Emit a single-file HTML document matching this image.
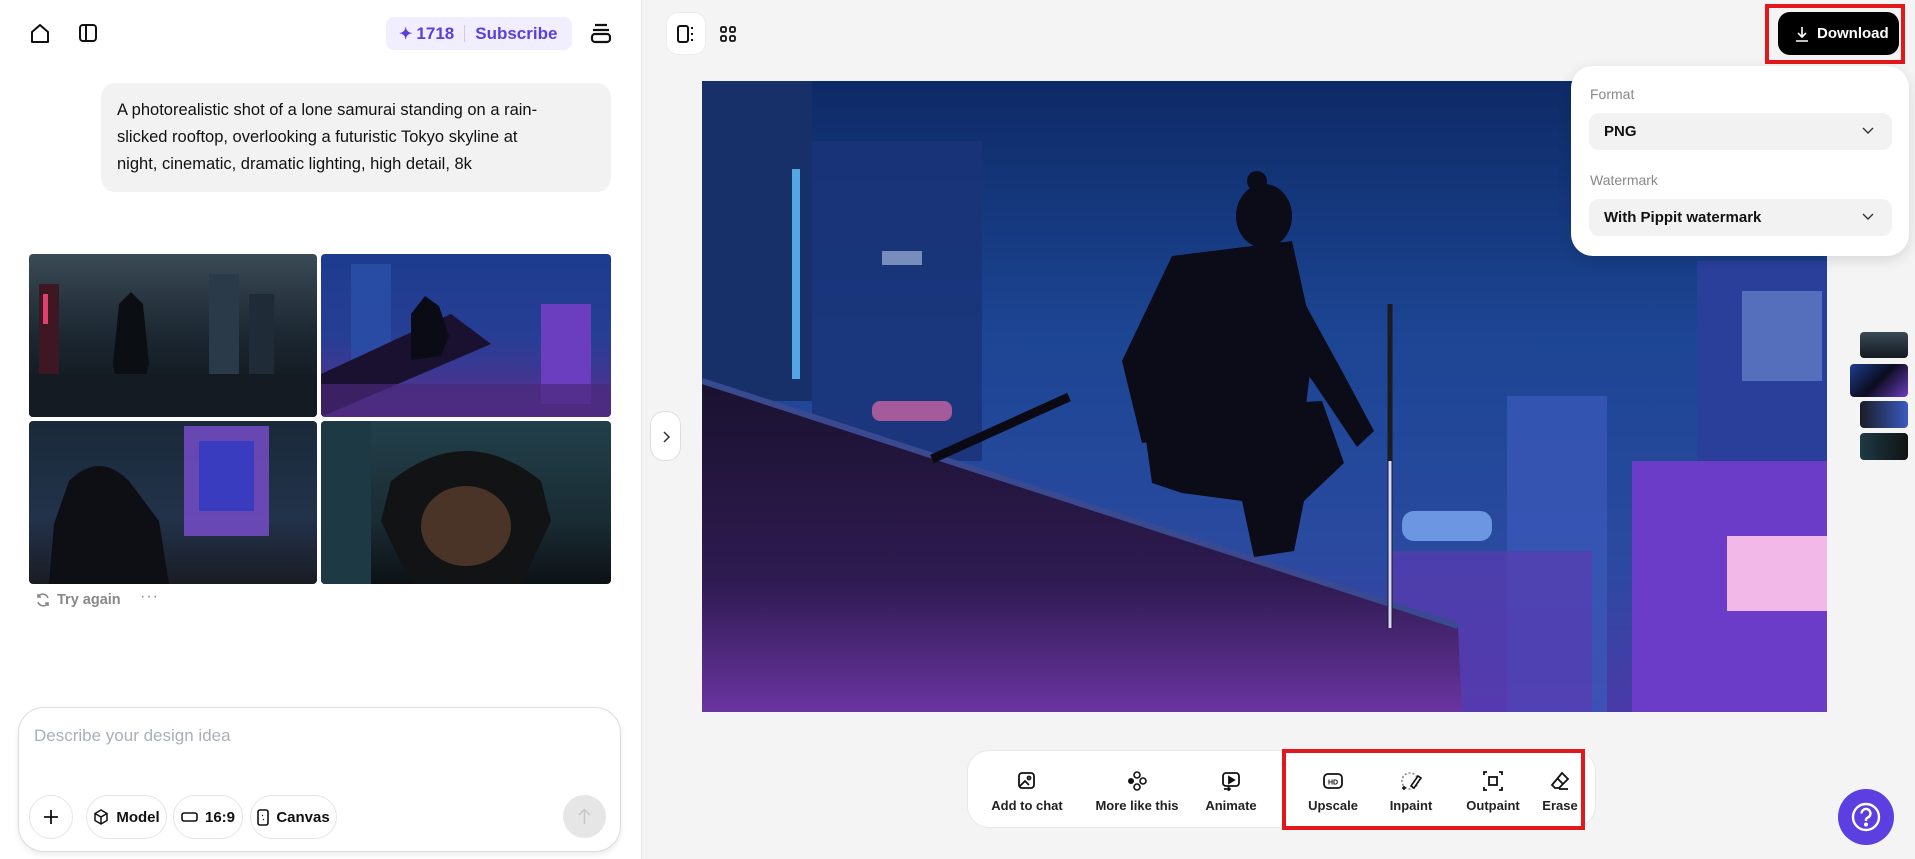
<!DOCTYPE html>
<html><head><meta charset="utf-8"><style>
*{box-sizing:border-box;margin:0;padding:0}
body{width:1915px;height:859px;overflow:hidden;font-family:"Liberation Sans",sans-serif;background:#f4f4f4;position:relative;color:#111}
.abs{position:absolute}
#left{left:0;top:0;width:642px;height:859px;background:#fff;border-right:1px solid #e6e6e6}
.ic{position:absolute}
.pill{left:386px;top:17px;width:186px;height:33px;background:#f1eeff;border-radius:8px;color:#5a3fe0;font-weight:bold;font-size:17px;display:flex;align-items:center;padding-left:13px}
.bubble{left:101px;top:83px;width:510px;height:109px;background:#f2f2f2;border-radius:14px;padding:14px 0 0 16px;font-size:16.5px;line-height:27px;color:#111}
.th{position:absolute;border-radius:4px;overflow:hidden}
.input{left:18px;top:707px;width:603px;height:145px;border:1px solid #ddd;border-radius:26px;background:#fff;box-shadow:0 3px 6px rgba(0,0,0,.08)}
.chip{position:absolute;top:87px;height:44px;border:1px solid #e5e5e5;border-radius:22px;display:flex;align-items:center;justify-content:center;gap:7px;font-weight:bold;font-size:15px}
.tb{position:absolute;top:0;height:78px;display:flex;flex-direction:column;align-items:center;justify-content:center;font-size:13px;font-weight:bold;color:#222;gap:7px;padding-top:4px}
.sel{position:absolute;left:18px;width:303px;height:37px;background:#f2f2f2;border-radius:10px;font-weight:bold;font-size:15px;display:flex;align-items:center;padding-left:15px}
.sel svg{position:absolute;right:18px;top:14px}
.lbl{position:absolute;left:19px;color:#888;font-size:14px}
</style></head><body>
<div id="left" class="abs">
 <svg class="ic" style="left:29px;top:22px" width="22" height="22" viewBox="0 0 22 22" fill="none" stroke="#111" stroke-width="2" stroke-linejoin="round"><path d="M3 10L11 3l8 7v10H3z"/></svg>
 <svg class="ic" style="left:78px;top:23px" width="20" height="20" viewBox="0 0 20 20" fill="none" stroke="#111" stroke-width="2"><rect x="2" y="2" width="16" height="16" rx="3"/><path d="M8 2v16"/></svg>
 <div class="abs pill"><span style="font-size:16px;margin-right:4px">✦</span>1718<span style="width:1px;height:17px;background:#cfc8f0;margin:0 10px"></span>Subscribe</div>
 <svg class="ic" style="left:590px;top:22px" width="22" height="22" viewBox="0 0 22 22" fill="none" stroke="#111" stroke-width="2.2"><path d="M5 3h12M3 8h16"/><rect x="2" y="12" width="18" height="8" rx="3"/></svg>
 <div class="abs bubble">A photorealistic shot of a lone samurai standing on a rain-<br>slicked rooftop, overlooking a futuristic Tokyo skyline at<br>night, cinematic, dramatic lighting, high detail, 8k</div>

 <div class="th" style="left:29px;top:254px;width:288px;height:163px;background:linear-gradient(180deg,#3a4a55 0%,#1c2731 50%,#0d1218 100%)">
  <svg width="288" height="163"><rect x="180" y="20" width="30" height="110" fill="#2a3a48"/><rect x="220" y="40" width="25" height="90" fill="#1f2c38"/><rect x="10" y="30" width="20" height="100" fill="#3d1822"/><rect x="14" y="40" width="5" height="30" fill="#e0406a"/><path d="M90 50l12-12 12 12 6 60-10 40h-20l-6-40z" fill="#0b0f14"/><rect x="0" y="120" width="288" height="43" fill="#141b22"/></svg></div>
 <div class="th" style="left:321px;top:254px;width:290px;height:163px;background:linear-gradient(180deg,#1d3c8e 0%,#263e94 50%,#5a2f8f 100%)">
  <svg width="290" height="163"><rect x="30" y="10" width="40" height="100" fill="#2b4fa8" opacity=".8"/><rect x="220" y="50" width="50" height="100" fill="#6b3ec0"/><path d="M0 120L130 60 170 90 0 163z" fill="#1a1030"/><path d="M90 60l14-18 14 10 10 30-8 20-30 4z" fill="#0a0b14"/><rect x="0" y="130" width="290" height="33" fill="#4a2a7a" opacity=".7"/></svg></div>
 <div class="th" style="left:29px;top:421px;width:288px;height:163px;background:linear-gradient(180deg,#1a2a3a 0%,#22324a 60%,#1a1c24 100%)">
  <svg width="288" height="163"><rect x="155" y="5" width="85" height="110" fill="#7b4fd0" opacity=".8"/><rect x="170" y="20" width="55" height="70" fill="#3a3cc0"/><path d="M40 60q30-30 60 0l30 40 10 63H20l5-60z" fill="#0e0f14"/></svg></div>
 <div class="th" style="left:321px;top:421px;width:290px;height:163px;background:linear-gradient(180deg,#22404a 0%,#1a2c34 60%,#0c1216 100%)">
  <svg width="290" height="163"><path d="M70 60q75-60 150 0l10 40-30 63H90l-30-63z" fill="#111314"/><ellipse cx="145" cy="105" rx="45" ry="40" fill="#4a3428"/><rect x="0" y="0" width="50" height="163" fill="#1d3a44"/></svg></div>

 <svg class="ic" style="left:35px;top:592px" width="16" height="16" viewBox="0 0 16 16" fill="none" stroke="#888" stroke-width="1.6"><path d="M13 6A5.5 5.5 0 0 0 3 5M3 10a5.5 5.5 0 0 0 10 1M3 2v3h3M13 14v-3h-3"/></svg>
 <div class="abs" style="left:57px;top:592px;font-size:14.5px;color:#888;font-weight:bold">Try again</div>
 <div class="abs" style="left:140px;top:588px;font-size:16px;color:#888;letter-spacing:1px">···</div>

 <div class="abs input">
  <div class="abs" style="left:15px;top:18px;font-size:17px;color:#aab0b8">Describe your design idea</div>
  <div class="chip" style="left:10px;width:44px"><svg width="18" height="18"><path d="M9 2v14M2 9h14" stroke="#111" stroke-width="1.8"/></svg></div>
  <div class="chip" style="left:67px;width:81px"><svg width="16" height="16" viewBox="0 0 16 16" fill="none" stroke="#111" stroke-width="1.5"><path d="M8 1l6 3.5v7L8 15l-6-3.5v-7zM2 4.5L8 8l6-3.5M8 8v7"/></svg>Model</div>
  <div class="chip" style="left:154px;width:70px"><svg width="17" height="12"><rect x="1" y="2" width="15" height="8" rx="2" fill="none" stroke="#111" stroke-width="1.6"/></svg>16:9</div>
  <div class="chip" style="left:231px;width:87px"><svg width="12" height="17"><rect x="1" y="1" width="10" height="15" rx="2" fill="none" stroke="#111" stroke-width="1.6"/><path d="M5 6l1 1M6 10l1 1" stroke="#111"/></svg>Canvas</div>
  <div class="abs" style="left:544px;top:87px;width:43px;height:43px;border-radius:50%;background:#e6e6e6"><svg width="43" height="43"><path d="M21.5 29V15M16 20l5.5-5.5L27 20" stroke="#c8c8c8" stroke-width="1.5" fill="none"/></svg></div>
 </div>
</div>

<div class="abs" style="left:666px;top:12px;width:40px;height:43px;background:#fff;border-radius:12px;border:1px solid #ececec"></div>
<svg class="ic" style="left:676px;top:24px" width="20" height="20" viewBox="0 0 20 20" fill="none" stroke="#111" stroke-width="2"><rect x="2" y="2" width="10" height="16" rx="2"/><path d="M16 3v2M16 9v2M16 15v2"/></svg>
<svg class="ic" style="left:718px;top:24px" width="20" height="20" viewBox="0 0 20 20" fill="none" stroke="#111" stroke-width="1.8"><rect x="3" y="3" width="5" height="5" rx="1.5"/><rect x="12" y="3" width="5" height="5" rx="1.5"/><rect x="3" y="12" width="5" height="5" rx="1.5"/><rect x="12" y="12" width="5" height="5" rx="1.5"/></svg>

<svg class="abs" style="left:702px;top:81px" width="1125" height="631" viewBox="0 0 1125 631">
 <defs>
  <linearGradient id="sky" x1="0" y1="0" x2="0" y2="1"><stop offset="0" stop-color="#0e2a66"/><stop offset=".4" stop-color="#1c4593"/><stop offset=".75" stop-color="#2a4aa0"/><stop offset="1" stop-color="#4a3aa8"/></linearGradient>
  <linearGradient id="roof" x1="0" y1="0" x2="0" y2="1"><stop offset="0" stop-color="#1a1230"/><stop offset=".6" stop-color="#2e1a50"/><stop offset="1" stop-color="#6a34a0"/></linearGradient>
 </defs>
 <rect width="1125" height="631" fill="url(#sky)"/>
 <rect x="0" y="0" width="110" height="320" fill="#17306a"/>
 <rect x="90" y="88" width="8" height="210" fill="#63c4ff" opacity=".8"/>
 <rect x="110" y="60" width="170" height="320" fill="#1a3478" opacity=".85"/>
 <rect x="180" y="170" width="40" height="14" fill="#b8c8e8" opacity=".6"/>
 <rect x="170" y="320" width="80" height="20" rx="8" fill="#e06aa8" opacity=".7"/>
 <rect x="805" y="315" width="100" height="316" fill="#3a58b8" opacity=".8"/>
 <rect x="995" y="180" width="130" height="451" fill="#2a3f9a"/>
 <rect x="1040" y="210" width="80" height="90" fill="#7fa0e0" opacity=".5"/>
 <rect x="930" y="380" width="195" height="251" fill="#6a3cc8"/>
 <rect x="1025" y="455" width="100" height="75" fill="#f2b8e8"/>
 <rect x="700" y="430" width="90" height="30" rx="12" fill="#8ab8ff" opacity=".7"/>
 <rect x="690" y="470" width="200" height="161" fill="#5a3ab0" opacity=".7"/>
 <path d="M0 300L756 545 760 631H0z" fill="url(#roof)"/>
 <path d="M0 300L756 545" stroke="#3a4a90" stroke-width="6"/>
 <path d="M230 378L367 316" stroke="#0b0a14" stroke-width="9"/>
 <g fill="#0c0b18">
  <ellipse cx="562" cy="135" rx="28" ry="32"/>
  <circle cx="555" cy="100" r="10"/>
  <path d="M470 175L590 160 612 260 602 340 440 362 420 280Z"/>
  <path d="M585 190L640 290 672 350 655 366 612 302 568 242Z"/>
  <path d="M440 330L620 320 642 382 602 420 592 470 552 476 540 420 480 412 450 402Z"/>
 </g>
 <path d="M688 223V547" stroke="#1c1a22" stroke-width="5"/>
 <path d="M688 380V547" stroke="#d8d8ff" stroke-width="3"/>
</svg>

<div class="abs" style="left:650px;top:411px;width:31px;height:50px;border:1px solid #ddd;border-radius:14px;background:#fff"><svg width="31" height="50"><path d="M13 20l5 5-5 5" stroke="#333" stroke-width="1.5" fill="none"/></svg></div>

<div class="abs" style="left:1765px;top:4px;width:140px;height:60px;border:4px solid #e3181c"></div>
<div class="abs" style="left:1778px;top:12px;width:121px;height:43px;background:#000;border-radius:12px;color:#fff;font-weight:bold;font-size:15px;display:flex;align-items:center;padding-left:16px;gap:7px"><svg width="16" height="16" fill="none" stroke="#fff" stroke-width="1.6"><path d="M8 1v10M4 7l4 4 4-4M2 15h12"/></svg>Download</div>

<div class="abs" style="left:1571px;top:66px;width:338px;height:190px;background:#fff;border-radius:22px;box-shadow:0 4px 14px rgba(0,0,0,.12)">
 <div class="lbl" style="top:20px">Format</div>
 <div class="sel" style="top:47px">PNG<svg width="12" height="8"><path d="M1 1l5 5 5-5" stroke="#333" stroke-width="1.4" fill="none"/></svg></div>
 <div class="lbl" style="top:106px">Watermark</div>
 <div class="sel" style="top:133px">With Pippit watermark<svg width="12" height="8"><path d="M1 1l5 5 5-5" stroke="#333" stroke-width="1.4" fill="none"/></svg></div>
</div>

<div class="th" style="left:1860px;top:332px;width:48px;height:26px;background:linear-gradient(#3a4a55,#141b22)"></div>
<div class="th" style="left:1850px;top:364px;width:58px;height:33px;background:linear-gradient(135deg,#1d3c8e,#0c0c1e 50%,#6b3ec0)"></div>
<div class="th" style="left:1860px;top:401px;width:48px;height:27px;background:linear-gradient(90deg,#1a1c24,#3a5ac0)"></div>
<div class="th" style="left:1860px;top:433px;width:48px;height:27px;background:linear-gradient(90deg,#1d3a44,#111314)"></div>

<div class="abs" style="left:967px;top:750px;width:629px;height:78px;background:#fff;border-radius:22px;border:1px solid #e8e8e8">
 <div class="tb" style="left:14px;width:90px"><svg width="20" height="20" fill="none" stroke="#111" stroke-width="1.8"><rect x="2" y="2" width="15" height="15" rx="3"/><path d="M3 15l5-5 4 4"/><circle cx="12" cy="7" r="1.5"/></svg>Add to chat</div>
 <div class="tb" style="left:123px;width:92px"><svg width="20" height="20" fill="#111"><circle cx="10" cy="4" r="3" fill="none" stroke="#111" stroke-width="1.6"/><circle cx="4" cy="10" r="3"/><circle cx="16" cy="10" r="3" fill="none" stroke="#111" stroke-width="1.6"/><circle cx="10" cy="16" r="3" fill="none" stroke="#111" stroke-width="1.6"/></svg>More like this</div>
 <div class="tb" style="left:227px;width:72px"><svg width="20" height="20" fill="none" stroke="#111" stroke-width="1.8"><rect x="2" y="2" width="16" height="13" rx="3"/><path d="M8 6l5 3-5 3z" fill="#111"/><path d="M3 18h6M7 16l2 2-2 2"/></svg>Animate</div>
 <div class="tb" style="left:330px;width:70px"><svg width="22" height="20" fill="none" stroke="#111" stroke-width="1.8"><rect x="2" y="3" width="18" height="14" rx="4"/><text x="11" y="13.5" font-size="7" font-weight="bold" text-anchor="middle" fill="#111" stroke="none" font-family="Liberation Sans">HD</text></svg>Upscale</div>
 <div class="tb" style="left:408px;width:70px"><svg width="22" height="20" fill="none" stroke="#111" stroke-width="1.6"><circle cx="10" cy="10" r="8" stroke-dasharray="2 2" stroke="#888"/><path d="M11 15l7-10 3 2-7 10z" fill="#fff"/><path d="M2 17h4M4 15v4"/></svg>Inpaint</div>
 <div class="tb" style="left:486px;width:78px"><svg width="20" height="20" fill="none" stroke="#111" stroke-width="1.8"><rect x="6" y="6" width="8" height="8"/><path d="M1 4V1h3M16 1h3v3M19 16v3h-3M4 19H1v-3"/></svg>Outpaint</div>
 <div class="tb" style="left:567px;width:50px"><svg width="20" height="20" fill="none" stroke="#111" stroke-width="1.8"><path d="M12 2l6 6-9 9H5l-3-3z M7 7l6 6M9 18h9"/></svg>Erase</div>
</div>
<div class="abs" style="left:1282px;top:749px;width:303px;height:81px;border:4px solid #e3181c"></div>

<div class="abs" style="left:1838px;top:789px;width:56px;height:56px;border-radius:50%;background:#5b3fe0"><svg width="56" height="56" fill="none" stroke="#fff" stroke-width="2.4"><circle cx="28" cy="28" r="13"/><path d="M23.5 24.5a4.5 4.5 0 1 1 6 4.2c-1 .5-1.5 1.2-1.5 2.3v1"/><circle cx="28" cy="35.5" r=".8" fill="#fff"/></svg></div>
</body></html>
